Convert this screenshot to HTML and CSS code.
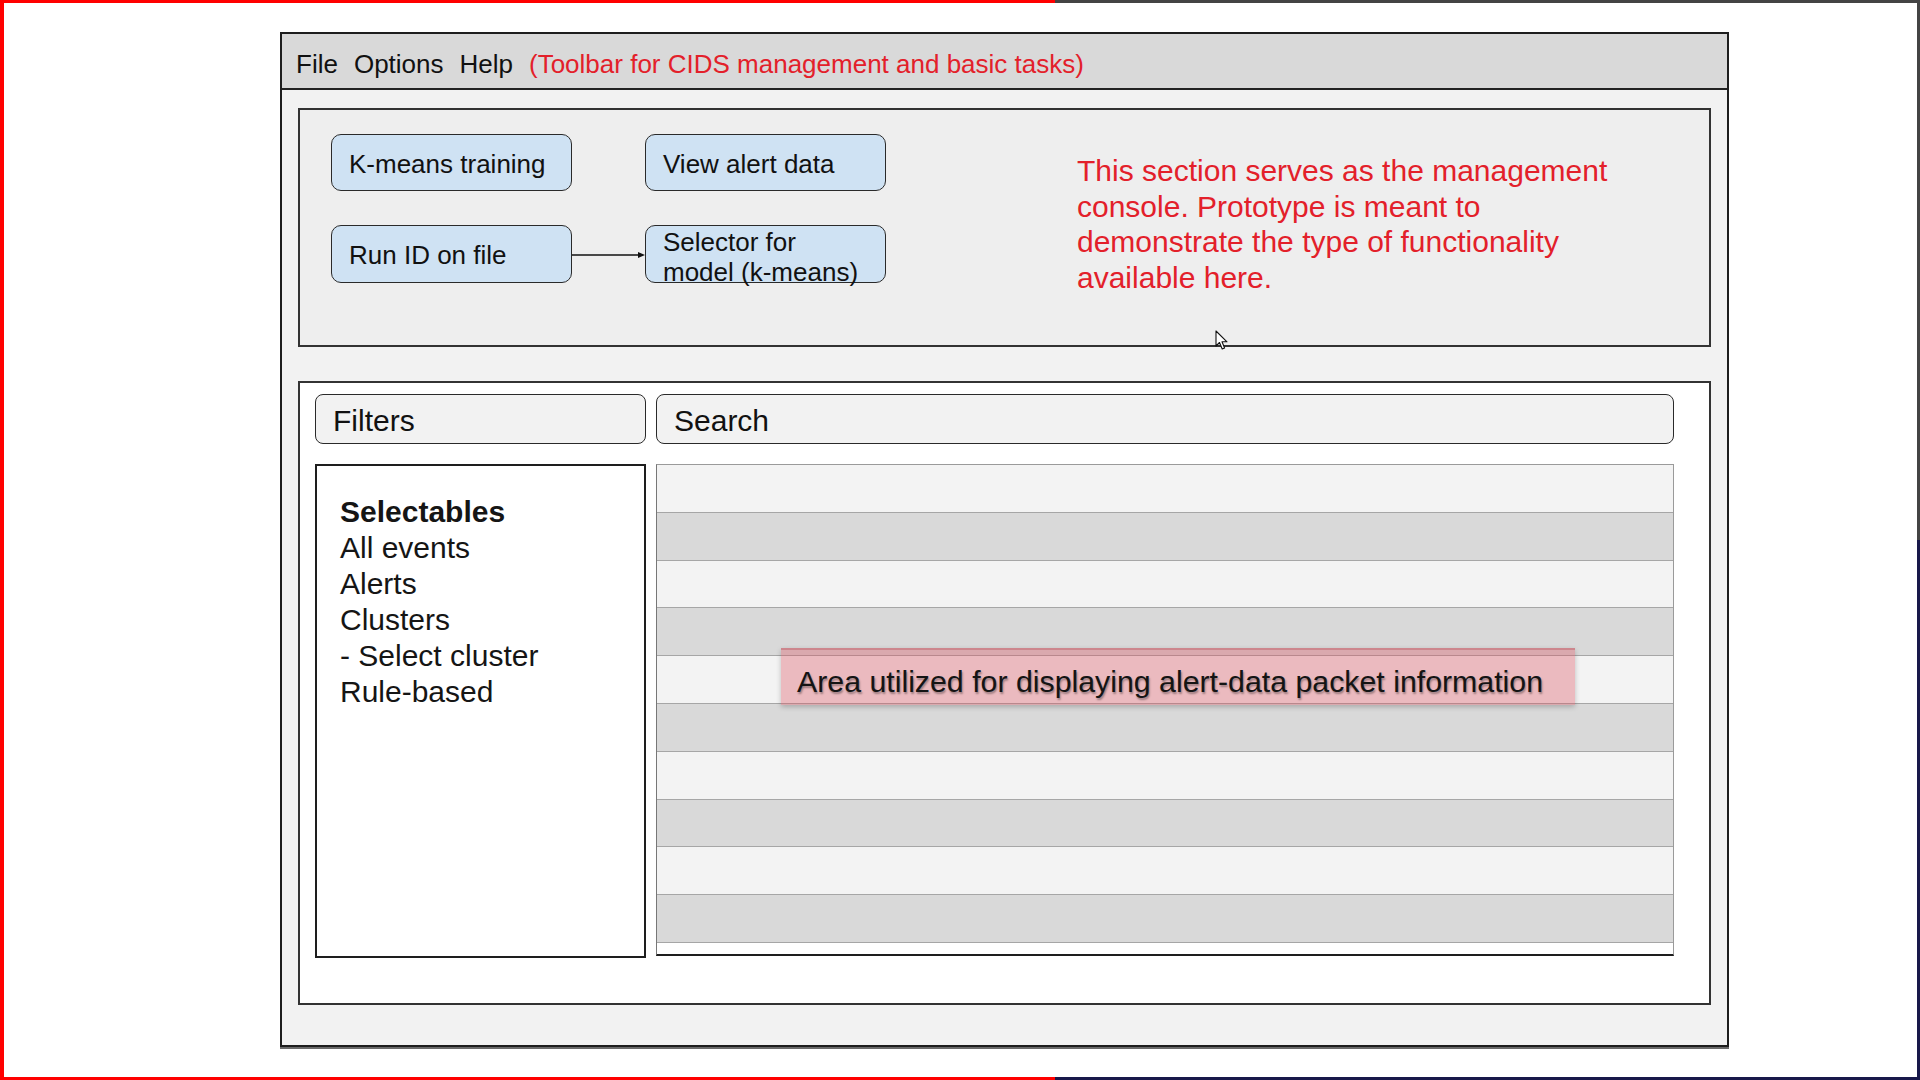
FILE: index.html
```html
<!DOCTYPE html>
<html lang="en">
<head>
<meta charset="utf-8">
<title>CIDS Prototype</title>
<link rel="stylesheet" href="styles.css">
</head>
<body>
<div class="screen">
  <div class="edge-top"><span class="seg-red"></span><span class="seg-gray"></span></div>
  <div class="edge-left"></div>
  <div class="stage">
    <div class="window">
      <div class="toolbar">
        <span class="menu">File</span>
        <span class="menu">Options</span>
        <span class="menu">Help</span>
        <span class="menu note-inline">(Toolbar for CIDS management and basic tasks)</span>
      </div>

      <div class="console">
        <div class="btn-grid">
          <div class="btn">K-means training</div>
          <div></div>
          <div class="btn">View alert data</div>
          <div class="btn">Run ID on file</div>
          <div class="connector">
            <svg width="73" height="10" viewBox="0 0 73 10"><line x1="0" y1="5" x2="66" y2="5" stroke="#111" stroke-width="1.6"/><polygon points="66,2 73,5 66,8" fill="#111"/></svg>
          </div>
          <div class="btn btn-two">Selector for<br>model (k-means)</div>
        </div>
        <p class="console-note">This section serves as the management console. Prototype is meant to demonstrate the type of functionality available here.</p>
        <svg class="cursor" width="14" height="21" viewBox="0 0 14 21"><path d="M1 1 L1 16 L4.5 12.5 L7.2 19 L9.6 18 L7 11.8 L12 11.8 Z" fill="#fff" stroke="#111" stroke-width="1.1" stroke-linejoin="round"/></svg>
      </div>

      <div class="viewer">
        <div class="field">Filters</div>
        <div class="field">Search</div>
        <div class="selectables">
          <div class="sel-title">Selectables</div>
          <div>All events</div>
          <div>Alerts</div>
          <div>Clusters</div>
          <div>- Select cluster</div>
          <div>Rule-based</div>
        </div>
        <div class="table">
          <div class="row light"></div>
          <div class="row dark"></div>
          <div class="row light"></div>
          <div class="row dark"></div>
          <div class="row light"></div>
          <div class="row dark"></div>
          <div class="row light"></div>
          <div class="row dark"></div>
          <div class="row light"></div>
          <div class="row dark"></div>
          <div class="area-label">Area utilized for displaying alert-data packet information</div>
        </div>
      </div>
    </div>
  </div>
  <div class="edge-right"><span class="seg-gray"></span><span class="seg-navy"></span></div>
  <div class="edge-bottom"><span class="seg-red"></span><span class="seg-navy"></span></div>
</div>
</body>
</html>
```

FILE: styles.css
```css
* { box-sizing: border-box; }

html, body {
  margin: 0;
  padding: 0;
  background: #ffffff;
  font-family: "Liberation Sans", Arial, sans-serif;
  color: #111;
}

.screen {
  width: 1920px;
  height: 1080px;
  display: grid;
  grid-template-columns: 4px 1fr 3px;
  grid-template-rows: 3px 1fr 3px;
  overflow: hidden;
}

.edge-top, .edge-bottom {
  grid-column: 1 / -1;
  display: flex;
}
.seg-red { background: #ff0000; width: 1055px; }
.seg-gray { background: #444444; flex: 1; }
.seg-navy { background: #18184a; flex: 1; }

.edge-left { background: #ff0000; }
.edge-right {
  display: flex;
  flex-direction: column;
}
.edge-right .seg-gray { flex: 0 0 537px; }

.stage {
  padding: 29px 0 0 276px;
  background: #ffffff;
}

.window {
  width: 1449px;
  height: 1015px;
  border: 2px solid #1e1e1e;
  background: #f2f2f2;
  box-shadow: 0 2px 0 #6a6a6a;
  display: flex;
  flex-direction: column;
}

.toolbar {
  height: 56px;
  background: #d9d9d9;
  border-bottom: 2px solid #222;
  display: flex;
  align-items: center;
  gap: 16px;
  padding: 6px 0 0 14px;
  font-size: 26px;
}
.note-inline { color: #e3202a; }

.console {
  position: relative;
  margin: 18px 16px 0;
  height: 239px;
  border: 2px solid #333;
  background: #eeeeee;
  display: flex;
  align-items: flex-start;
  padding: 24px 0 0 31px;
}

.btn-grid {
  display: grid;
  grid-template-columns: 241px 73px 241px;
  grid-template-rows: 57px 58px;
  row-gap: 34px;
}

.btn {
  background: #cfe2f3;
  border: 1.5px solid #2a2a2a;
  border-radius: 10px;
  font-size: 26px;
  display: flex;
  align-items: center;
  padding: 3px 0 0 17px;
  white-space: nowrap;
}
.btn-two {
  line-height: 30px;
  padding-top: 5px;
}

.connector {
  display: flex;
  align-items: center;
  padding-top: 2px;
}
.connector svg { display: block; }

.console-note {
  margin: 19px 0 0 191px;
  width: 560px;
  font-size: 30px;
  line-height: 35.5px;
  color: #e3202a;
}

.cursor {
  position: absolute;
  left: 915px;
  top: 220px;
}

.viewer {
  margin: 34px 16px 0;
  height: 624px;
  border: 2px solid #333;
  background: #ffffff;
  padding: 11px 0 0 15px;
  display: grid;
  grid-template-columns: 331px 1018px;
  grid-template-rows: 50px 494px;
  column-gap: 10px;
  row-gap: 20px;
}

.field {
  background: #f2f2f2;
  border: 1.5px solid #2a2a2a;
  border-radius: 8px;
  font-size: 30px;
  display: flex;
  align-items: center;
  padding: 3px 0 0 17px;
}

.selectables {
  border: 2px solid #1e1e1e;
  background: #ffffff;
  padding: 28px 0 0 23px;
  font-size: 30px;
  line-height: 36px;
  color: #151515;
}
.sel-title { font-weight: bold; }

.table {
  position: relative;
  height: 492px;
  border: 1px solid #9a9a9a;
  border-bottom: 2px solid #1e1e1e;
  border-left-color: #777;
  background: #ffffff;
}

.row {
  height: 47.8px;
  border-bottom: 1.5px solid #a6a6a6;
}
.row.light { background: #f3f3f3; }
.row.dark { background: #d9d9d9; }

.area-label {
  position: absolute;
  left: 124px;
  top: 183px;
  width: 794px;
  height: 57px;
  background: rgba(220, 80, 95, 0.35);
  box-shadow: 0 2px 5px rgba(0, 0, 0, 0.22);
  border-top: 2px solid rgba(180, 70, 80, 0.35);
  display: flex;
  align-items: center;
  padding: 8px 0 0 16px;
  font-size: 30.3px;
  color: #141414;
  text-shadow: 1px 2px 2px rgba(0, 0, 0, 0.35);
  white-space: nowrap;
}
```
